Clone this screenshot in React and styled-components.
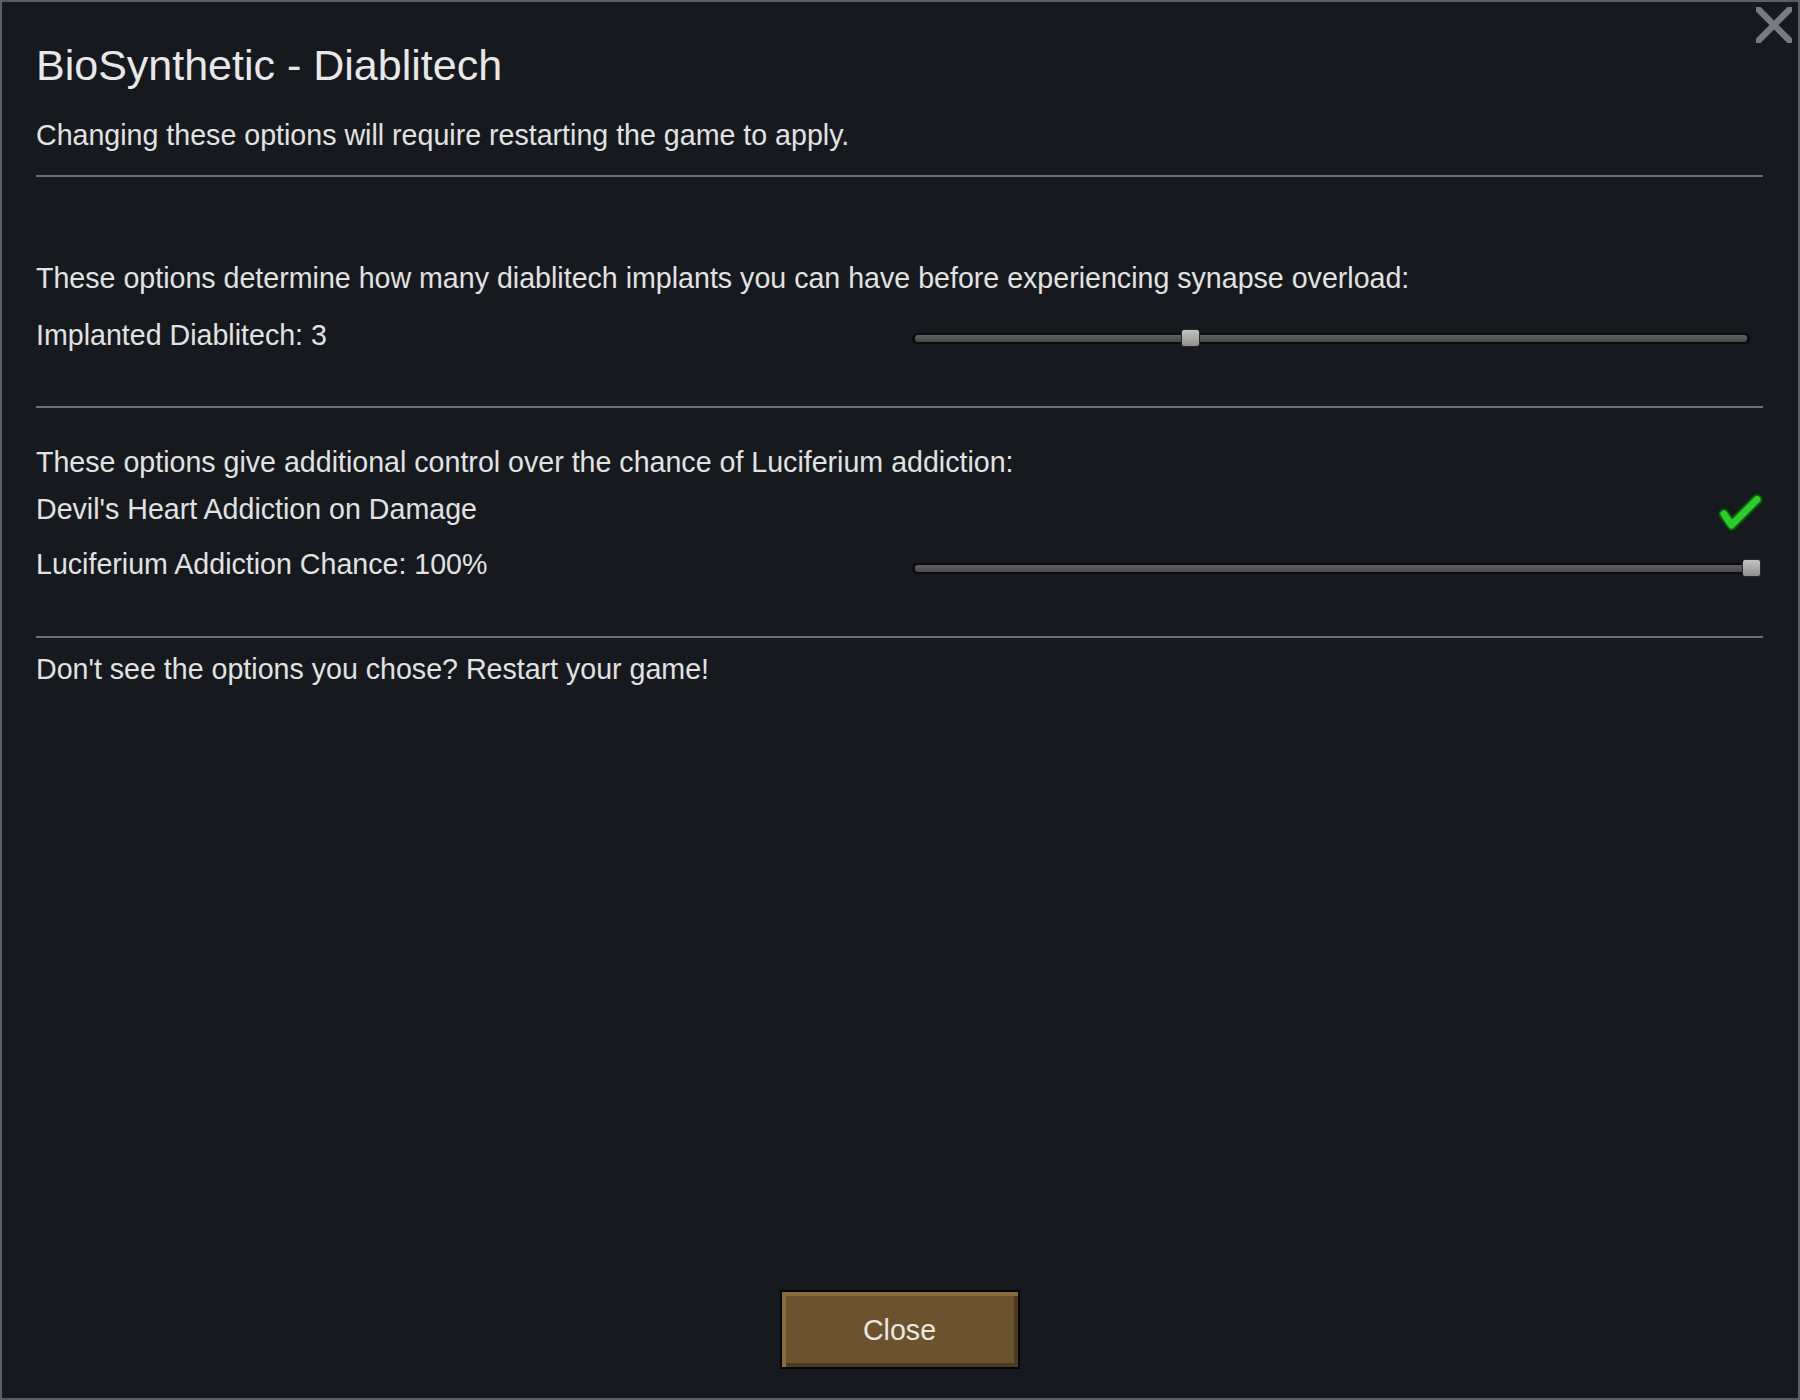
import React from "react";
import styled, { createGlobalStyle } from "styled-components";

const GlobalStyle = createGlobalStyle`
    html, body {
        margin: 0;
        padding: 0;
        background: #161a1f;
    }
    body {
        font-family: "Liberation Sans", Arial, sans-serif;
    }
`;

const Slider = ({ value, min, max, mt }) => {
    const pct = (value - min) / (max - min);
    return (
        <SliderBox $mt={mt}>
            <Track>
                <TrackFill />
            </Track>
            <Thumb style={{ left: `calc(${pct} * (100% - 19px))` }} />
        </SliderBox>
    );
};

const CheckMark = () => (
    <CheckIcon width="45" height="39" viewBox="0 0 45 39">
        <polyline
            points="6,21 13.5,32 39,6.5"
            fill="none"
            stroke="#0c5a0c"
            strokeWidth="11"
            strokeLinecap="round"
            strokeLinejoin="round"
        />
        <polyline
            points="6,21 13.5,32 39,6.5"
            fill="none"
            stroke="#2bcd2b"
            strokeWidth="7"
            strokeLinecap="round"
            strokeLinejoin="round"
        />
    </CheckIcon>
);

const App = () => {
    return (
        <>
            <GlobalStyle />
            <Window>
                <CloseX aria-label="close">
                    <svg width="36" height="36" viewBox="0 0 36 36">
                        <line x1="-3" y1="-3" x2="39" y2="39" stroke="#787c81" strokeWidth="6.5" />
                        <line x1="39" y1="-3" x2="-3" y2="39" stroke="#787c81" strokeWidth="6.5" />
                    </svg>
                </CloseX>

                <Title>BioSynthetic - Diablitech</Title>
                <Text $mt={30}>Changing these options will require restarting the game to apply.</Text>
                <Divider $mt={24} />

                <Text $mt={85}>
                    These options determine how many diablitech implants you can have before experiencing synapse overload:
                </Text>
                <Row $mt={25}>
                    <Label>Implanted Diablitech: 3</Label>
                    <Slider value={3} min={0} max={9.25} mt={10} />
                </Row>
                <Divider $mt={55} />

                <Text $mt={38}>These options give additional control over the chance of Luciferium addiction:</Text>
                <Row $mt={15}>
                    <Label>Devil's Heart Addiction on Damage</Label>
                    <CheckMark />
                </Row>
                <Row $mt={16}>
                    <Label>Luciferium Addiction Chance: 100%</Label>
                    <Slider value={100} min={0} max={100} mt={11} />
                </Row>
                <Divider $mt={56} />

                <Text $mt={15}>Don't see the options you chose? Restart your game!</Text>

                <CloseButton>Close</CloseButton>
            </Window>
        </>
    );
};

const Window = styled.div`
    position: relative;
    box-sizing: border-box;
    width: 1800px;
    height: 1400px;
    border: 2px solid #5c6065;
    background: #161a1f;
    display: flex;
    flex-direction: column;
    padding: 39px 35px 29px 34px;
    color: #e2e2e2;
`;

const CloseX = styled.button`
    position: absolute;
    top: 5px;
    right: 6px;
    width: 36px;
    height: 36px;
    padding: 0;
    border: none;
    background: none;
    cursor: pointer;
    svg {
        display: block;
    }
`;

const Title = styled.h1`
    margin: 0;
    font-size: 43px;
    line-height: 48px;
    font-weight: 400;
    color: #e8e8e8;
`;

const Text = styled.p`
    margin: ${(p) => p.$mt || 0}px 0 0;
    font-size: 28.6px;
    line-height: 32px;
    white-space: nowrap;
`;

const Divider = styled.div`
    height: 2px;
    margin-top: ${(p) => p.$mt || 0}px;
    background: #6c7074;
    flex-shrink: 0;
`;

const Row = styled.div`
    display: flex;
    align-items: flex-start;
    margin-top: ${(p) => p.$mt || 0}px;
`;

const Label = styled.span`
    font-size: 28.6px;
    line-height: 32px;
    white-space: nowrap;
`;

const SliderBox = styled.div`
    position: relative;
    width: 849px;
    height: 18px;
    margin: ${(p) => p.$mt || 0}px 2px 0 auto;
    display: flex;
    align-items: center;
`;

const Track = styled.div`
    width: 838px;
    height: 11px;
    box-sizing: border-box;
    padding: 2px 3px;
    border-radius: 6px;
    background: #0a0c0e;
    display: flex;
`;

const TrackFill = styled.div`
    flex: 1;
    border-radius: 3px;
    background: linear-gradient(#616261, #484948);
`;

const Thumb = styled.div`
    position: absolute;
    top: 0;
    width: 19px;
    height: 18px;
    box-sizing: border-box;
    border: 1px solid #26282a;
    border-radius: 3px;
    background: linear-gradient(#c4c4c4, #8e8e8e);
`;

const CheckIcon = styled.svg`
    display: block;
    margin: 0 0 0 auto;
`;

const CloseButton = styled.button`
    margin-top: auto;
    align-self: center;
    width: 240px;
    height: 79px;
    box-sizing: border-box;
    border: 2px solid #050505;
    padding: 0;
    background: #6b5330;
    box-shadow: inset 5px 5px 0 -1px #8a6b3a, inset -5px -5px 0 -1px #4e3c22;
    color: #ebe7e0;
    font-family: "Liberation Sans", Arial, sans-serif;
    font-size: 28.6px;
    line-height: 32px;
    cursor: pointer;
`;

export default App;
